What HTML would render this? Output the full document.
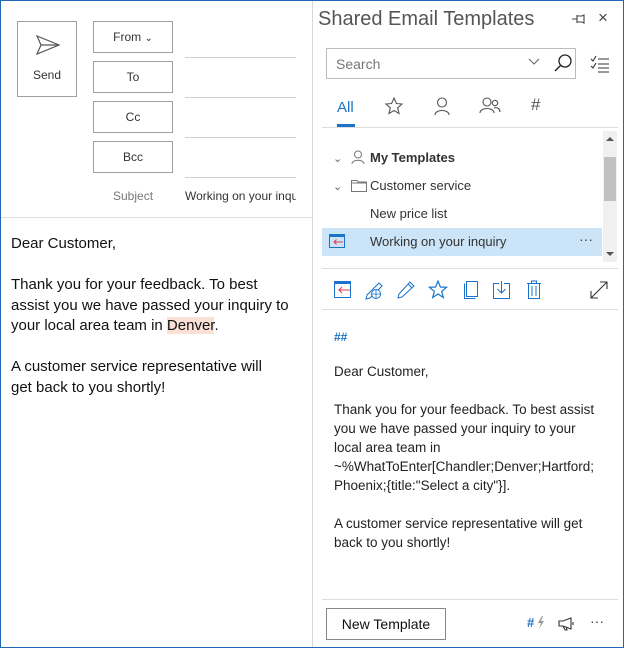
<!DOCTYPE html>
<html><head><style>
*{box-sizing:border-box;margin:0;padding:0}
body{width:624px;height:648px;overflow:hidden;font-family:"Liberation Sans",sans-serif;color:#222;background:#fff;position:relative}
.frame{position:absolute;left:0;top:0;width:624px;height:648px;border:1px solid #1f67b1;}
.a{position:absolute}
.btn{position:absolute;border:1px solid #9e9e9e;background:#fff;font-size:12px;color:#333;text-align:center}
.line{position:absolute;height:1px;background:#d0d0d0}
.body{font-size:15px;line-height:20.5px;color:#111}
.tpl{font-size:13.5px;line-height:19px;color:#222}
</style></head><body>
<div class="frame"></div>
<div class="btn" style="left:17px;top:21px;width:60px;height:76px;">
<svg class="a" style="left:17px;top:13px" width="26" height="20" viewBox="0 0 26 20"><path d="M2 1 L24 10 L2 19 L6 10 Z M6 10 H24" fill="none" stroke="#555" stroke-width="1.2"/></svg>
<div class="a" style="left:0;right:0;top:46px">Send</div></div>
<div class="btn" style="left:93px;top:21px;width:80px;height:32px;line-height:30px">From <span style="font-size:10px">&#8964;</span></div>
<div class="btn" style="left:93px;top:61px;width:80px;height:32px;line-height:30px">To</div>
<div class="btn" style="left:93px;top:101px;width:80px;height:32px;line-height:30px">Cc</div>
<div class="btn" style="left:93px;top:141px;width:80px;height:32px;line-height:30px">Bcc</div>
<div class="line" style="left:185px;top:57px;width:111px"></div>
<div class="line" style="left:185px;top:97px;width:111px"></div>
<div class="line" style="left:185px;top:137px;width:111px"></div>
<div class="line" style="left:185px;top:177px;width:111px"></div>
<div class="a" style="left:113px;top:189px;font-size:12px;color:#777">Subject</div>
<div class="a" style="left:185px;top:189px;font-size:12px;color:#333;width:111px;overflow:hidden;white-space:nowrap">Working on your inquiry</div>
<div class="line" style="left:1px;top:217px;width:311px;background:#ddd"></div>
<div class="a" style="left:312px;top:1px;width:1px;height:646px;background:#d8d8d8"></div>
<div class="a body" style="left:11px;top:234px;width:280px">Dear Customer,<br><br>Thank you for your feedback. To best assist you we have passed your inquiry to your local area team in <span style="background:#fbe0d6">Denver</span>.<br><br>A customer service representative will<br>get back to you shortly!</div>
<div class="a" style="left:318px;top:8px;font-size:20px;color:#555">Shared Email Templates</div>
<svg class="a" style="left:571px;top:12px" width="18" height="14" viewBox="0 0 18 14"><path d="M1 7H6 M6 3V11 M6 4H11L13 3V11L11 10H6" fill="none" stroke="#444" stroke-width="1.1"/></svg>
<div class="a" style="left:598px;top:8px;font-size:17px;color:#444">×</div>
<div class="a" style="left:326px;top:48px;width:250px;height:31px;border:1px solid #bbb"></div>
<div class="a" style="left:336px;top:56px;font-size:14px;color:#777">Search</div>
<svg class="a" style="left:528px;top:58px" width="12" height="8"><path d="M1 1L6 6L11 1" fill="none" stroke="#666" stroke-width="1.1"/></svg>
<svg class="a" style="left:553px;top:53px" width="20" height="20"><circle cx="12" cy="8" r="6" fill="none" stroke="#222" stroke-width="1.3"/><path d="M7.5 12.5L2 18" stroke="#222" stroke-width="1.4"/></svg>
<svg class="a" style="left:590px;top:55px" width="20" height="18"><path d="M1 4L3 6L6 1 M1 11L3 13L6 8 M8 4H19 M8 9H19 M8 13H19 M8 17H19" fill="none" stroke="#333" stroke-width="1.1"/></svg>
<div class="a" style="left:337px;top:99px;font-size:15px;color:#1a73c8">All</div>
<div class="a" style="left:337px;top:124px;width:18px;height:3px;background:#1a73c8"></div>
<svg class="a" style="left:384px;top:96px" width="20" height="20"><path d="M10 2L12.4 7.5L18 8L13.7 11.8L15 17.5L10 14.5L5 17.5L6.3 11.8L2 8L7.6 7.5Z" fill="none" stroke="#555" stroke-width="1.1"/></svg>
<svg class="a" style="left:432px;top:96px" width="20" height="20"><circle cx="10" cy="6.5" r="4.5" fill="none" stroke="#555" stroke-width="1.1"/><path d="M3 19C3 13 17 13 17 19" fill="none" stroke="#555" stroke-width="1.1"/></svg>
<svg class="a" style="left:479px;top:96px" width="22" height="20"><circle cx="8" cy="6" r="4" fill="none" stroke="#555" stroke-width="1.1"/><path d="M1 17C1 11 15 11 15 17" fill="none" stroke="#555" stroke-width="1.1"/><circle cx="16" cy="7" r="2.7" fill="none" stroke="#555" stroke-width="1.1"/><path d="M15 12C19 11 21 13 21 16" fill="none" stroke="#555" stroke-width="1.1"/></svg>
<div class="a" style="left:531px;top:95px;font-size:17px;color:#555">#</div>
<div class="line" style="left:322px;top:127px;width:296px;background:#ddd"></div>
<div class="a" style="left:603px;top:131px;width:14px;height:131px;background:#f0f0f0"></div>
<div class="a" style="left:604px;top:157px;width:12px;height:44px;background:#c1c1c1"></div>
<div class="a" style="left:606px;top:137px;width:0;height:0;border-left:4px solid transparent;border-right:4px solid transparent;border-bottom:4px solid #555"></div>
<div class="a" style="left:606px;top:252px;width:0;height:0;border-left:4px solid transparent;border-right:4px solid transparent;border-top:4px solid #555"></div>
<div class="a" style="left:333px;top:152px;font-size:11px;color:#666">&#8964;</div>
<svg class="a" style="left:351px;top:150px" width="14" height="15"><circle cx="7" cy="4.5" r="3.5" fill="none" stroke="#777"/><path d="M1 14C1 9 13 9 13 14" fill="none" stroke="#777"/></svg>
<div class="a" style="left:370px;top:150px;font-size:13px;font-weight:bold;color:#333">My Templates</div>
<div class="a" style="left:333px;top:180px;font-size:11px;color:#666">&#8964;</div>
<svg class="a" style="left:351px;top:179px" width="16" height="13"><path d="M0.5 1.5H6L7 3H15.5V12.5H0.5Z M0.5 4H15.5" fill="none" stroke="#777"/></svg>
<div class="a" style="left:370px;top:178px;font-size:13px;color:#333">Customer service</div>
<div class="a" style="left:370px;top:206px;font-size:13px;color:#333">New price list</div>
<div class="a" style="left:322px;top:228px;width:280px;height:28px;background:#cce4f7"></div>
<svg class="a" style="left:329px;top:234px" width="16" height="14"><path d="M0.5 0.5H15.5V13.5H0.5Z" fill="none" stroke="#1a73c8"/><path d="M0.5 2H15.5" stroke="#1a73c8" stroke-width="2"/><path d="M14 8H5 M7.5 5.5L5 8L7.5 10.5" fill="none" stroke="#e03a4a"/></svg>
<div class="a" style="left:370px;top:234px;font-size:13px;color:#333">Working on your inquiry</div>
<div class="a" style="left:579px;top:231px;font-size:14px;color:#444">···</div>
<div class="line" style="left:322px;top:268px;width:296px;background:#ddd"></div>
<svg class="a" style="left:334px;top:281px" width="18" height="17"><path d="M0.5 0.5H16.5V16.5H0.5Z" fill="none" stroke="#1a73c8"/><path d="M0.5 2H16.5" stroke="#1a73c8" stroke-width="2"/><path d="M16 9H5 M8 6L5 9L8 12" fill="none" stroke="#e03a4a"/></svg>
<svg class="a" style="left:364px;top:280px" width="20" height="20"><path d="M3 15L15 3L18 6L6 18L2 19Z" fill="none" stroke="#1a73c8"/><circle cx="12" cy="14" r="4.5" fill="#fff" stroke="#1a73c8"/><path d="M7.5 14H16.5 M12 9.5V18.5" stroke="#1a73c8" stroke-width="0.8"/></svg>
<svg class="a" style="left:397px;top:280px" width="18" height="19"><path d="M2 14L13 2L17 6L5 17L1 18Z M11 4L15 8" fill="none" stroke="#1a73c8"/></svg>
<svg class="a" style="left:428px;top:280px" width="20" height="19"><path d="M10 1L12.4 7L18.5 7.3L13.7 11.3L15.3 17.5L10 14L4.7 17.5L6.3 11.3L1.5 7.3L7.6 7Z" fill="none" stroke="#1a73c8" stroke-width="1.2"/></svg>
<svg class="a" style="left:462px;top:280px" width="16" height="19"><path d="M2.5 3.5V18.5H13.5 M4.5 1.5H15.5V16.5H4.5Z" fill="none" stroke="#1a73c8"/></svg>
<svg class="a" style="left:493px;top:280px" width="18" height="19"><path d="M6 3.5H0.5V18.5H16.5V3.5H11 M8.5 1V13 M4.5 9L8.5 13L12.5 9" fill="none" stroke="#1a73c8"/></svg>
<svg class="a" style="left:526px;top:280px" width="16" height="19"><path d="M1 3.5H15 M5.5 3.5V1H10.5V3.5 M2.5 3.5V18.5H13.5V3.5 M6 6V16 M10 6V16" fill="none" stroke="#1a73c8"/></svg>
<svg class="a" style="left:590px;top:281px" width="18" height="18"><path d="M1 17L17 1 M10 1H17V8 M1 10V17H8" fill="none" stroke="#333" stroke-width="1.1"/></svg>
<div class="line" style="left:322px;top:309px;width:296px;background:#ddd"></div>
<div class="a" style="left:334px;top:330px;font-size:12px;color:#1a73c8;font-weight:bold">##</div>
<div class="a tpl" style="left:334px;top:362px;width:272px">Dear Customer,<br><br>Thank you for your feedback. To best assist<br>you we have passed your inquiry to your<br>local area team in<br>~%WhatToEnter[Chandler;Denver;Hartford;<br>Phoenix;{title:"Select a city"}].<br><br>A customer service representative will get<br>back to you shortly!</div>
<div class="line" style="left:322px;top:599px;width:296px;background:#ddd"></div>
<div class="btn" style="left:326px;top:608px;width:120px;height:32px;line-height:30px;font-size:14px;color:#111;border-color:#888">New Template</div>
<div class="a" style="left:527px;top:615px;font-size:13px;font-weight:bold;color:#1a73c8">#</div>
<svg class="a" style="left:537px;top:616px" width="8" height="13"><path d="M5 0L1 7H4L2 13L7 5H4L6 0Z" fill="#999"/></svg>
<svg class="a" style="left:558px;top:617px" width="20" height="14"><path d="M1 4H5L13 1V12L5 9H1Z M5 9L7 13H9L8 9.5 M15 5V8" fill="none" stroke="#333" stroke-width="1.1"/></svg>
<div class="a" style="left:590px;top:613px;font-size:14px;color:#444">···</div>
</body></html>
